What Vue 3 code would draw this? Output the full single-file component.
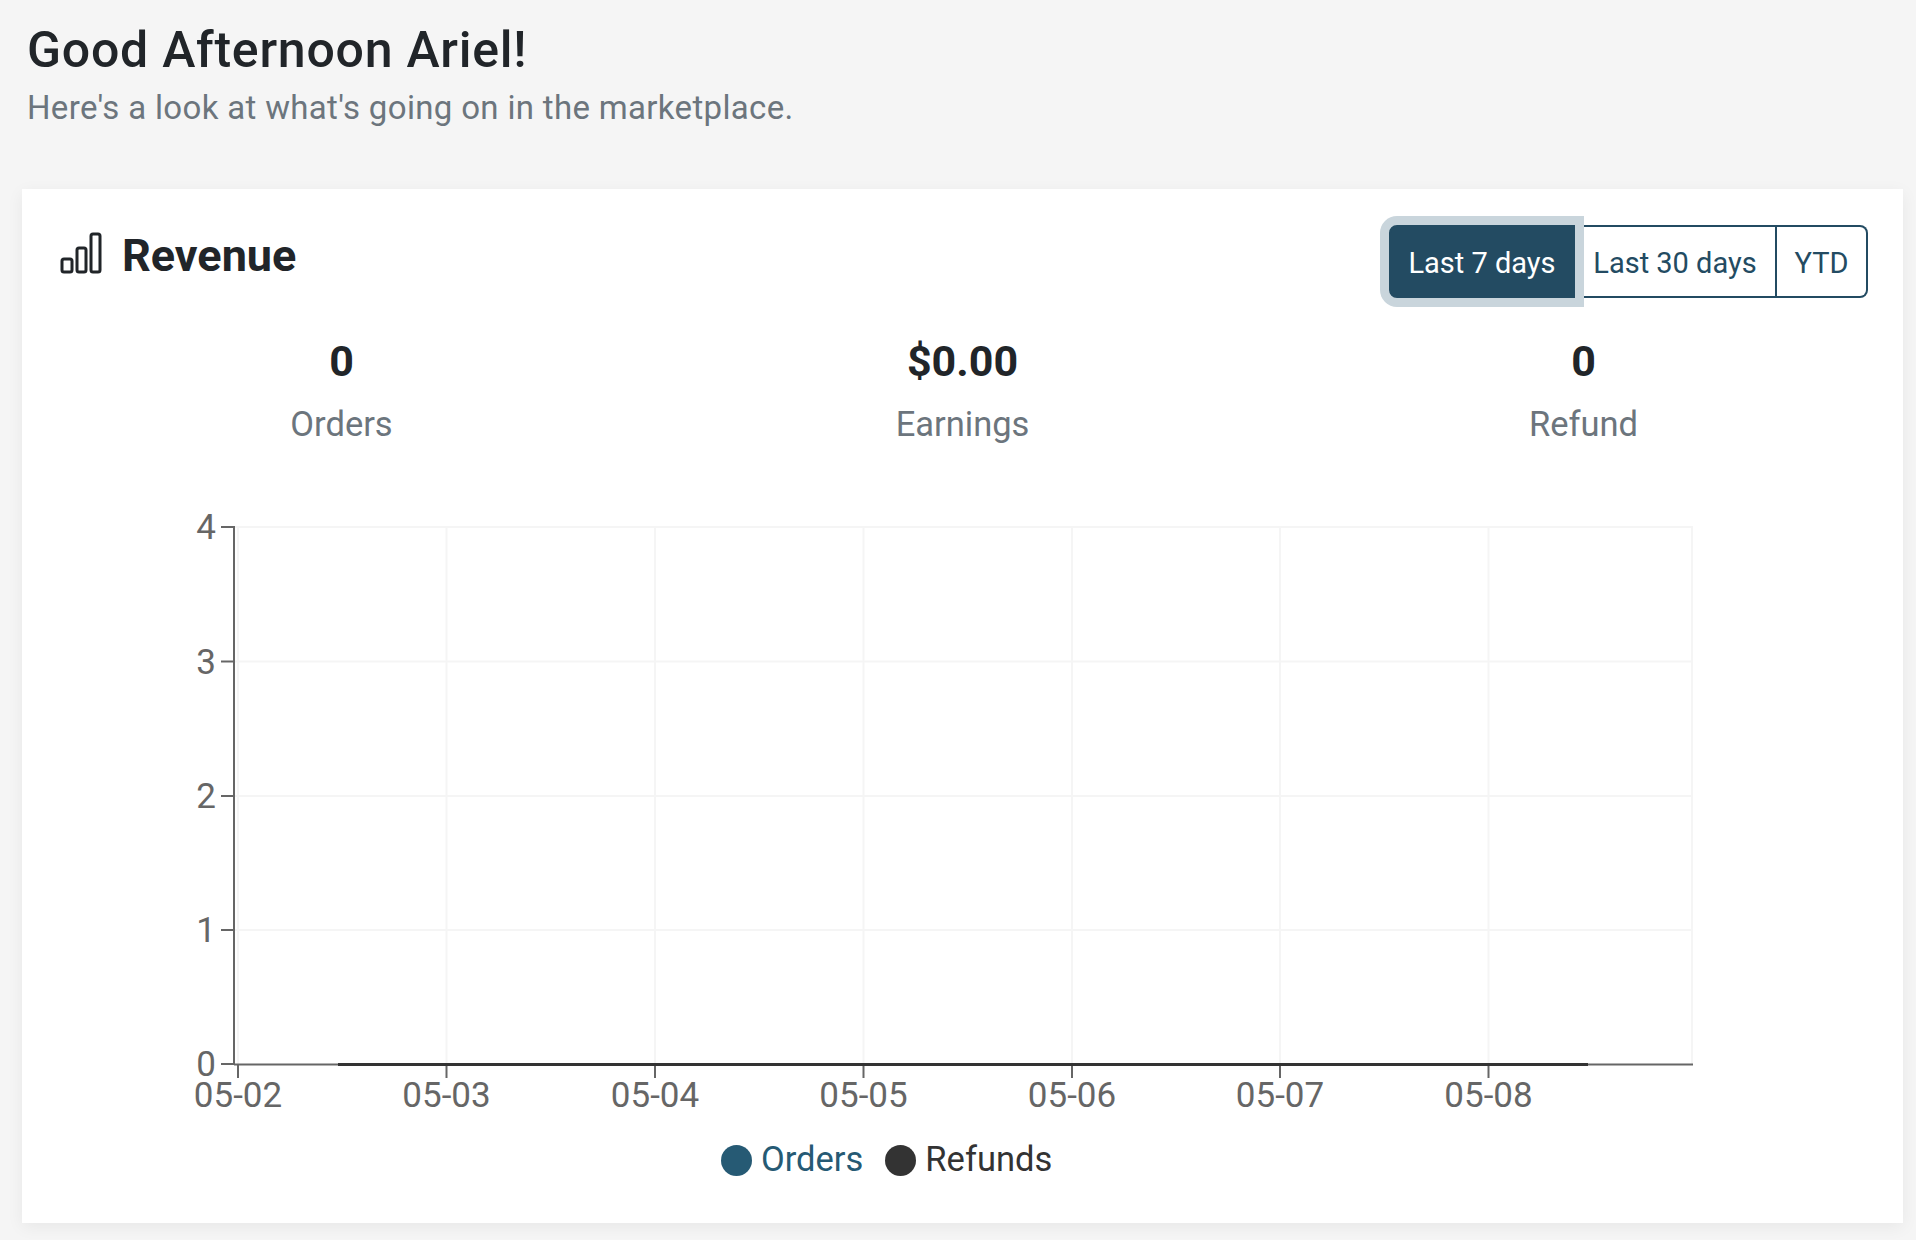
<script setup>
const yTicks = [
  { label: '4', y: 526 },
  { label: '3', y: 660.5 },
  { label: '2', y: 795 },
  { label: '1', y: 929 },
  { label: '0', y: 1063 }
]
const xTicks = [
  { label: '05-02', x: 238 },
  { label: '05-03', x: 446.5 },
  { label: '05-04', x: 655 },
  { label: '05-05', x: 863.5 },
  { label: '05-06', x: 1072 },
  { label: '05-07', x: 1280 },
  { label: '05-08', x: 1488.5 }
]
const stats = [
  { value: '0', label: 'Orders' },
  { value: '$0.00', label: 'Earnings' },
  { value: '0', label: 'Refund' }
]
const ranges = ['Last 7 days', 'Last 30 days', 'YTD']
</script>

<template>
  <div class="page">
    <header class="intro">
      <h1>Good Afternoon Ariel!</h1>
      <p>Here's a look at what's going on in the marketplace.</p>
    </header>

    <section class="card">
      <div class="card-head">
        <h2>
          <svg class="bars" width="42" height="42" viewBox="0 0 42 42" fill="none" stroke="#212529" stroke-width="3">
            <rect x="2" y="27" width="10" height="13" rx="2" />
            <rect x="17" y="16" width="9" height="24" rx="2" />
            <rect x="31" y="2" width="9" height="38" rx="2" />
          </svg>
          Revenue
        </h2>
        <div class="range">
          <button
            v-for="(r, i) in ranges"
            :key="r"
            type="button"
            :class="['range-btn', `range-${i}`, { active: i === 0 }]"
          >{{ r }}</button>
        </div>
      </div>

      <div class="stats">
        <div v-for="s in stats" :key="s.label" class="stat">
          <strong>{{ s.value }}</strong>
          <span>{{ s.label }}</span>
        </div>
      </div>

      <svg class="chart" width="1881" height="620" viewBox="22 500 1881 620">
        <g stroke="#f5f5f5" stroke-width="2">
          <line v-for="t in yTicks.slice(0, 4)" :key="t.label" x1="234" :y1="t.y" x2="1693" :y2="t.y" />
          <line v-for="t in xTicks.slice(1)" :key="t.label" :x1="t.x" y1="526" :x2="t.x" y2="1063" />
          <line x1="238" y1="526" x2="238" y2="1063" />
          <line x1="1692" y1="526" x2="1692" y2="1063" />
        </g>
        <g stroke="#666" stroke-width="2">
          <line x1="234" y1="525" x2="234" y2="1064" />
          <line x1="234" y1="1063.5" x2="1693" y2="1063.5" />
          <line v-for="t in yTicks" :key="t.label" x1="221" :y1="t.y" x2="234" :y2="t.y" />
          <line v-for="t in xTicks" :key="t.label" :x1="t.x" y1="1064" :x2="t.x" y2="1077" />
        </g>
        <line x1="338" y1="1063.5" x2="1588" y2="1063.5" stroke="#333" stroke-width="3" />
        <text v-for="t in yTicks" :key="t.label" class="tick" x="216" :y="t.y + 12" text-anchor="end">{{ t.label }}</text>
        <text v-for="t in xTicks" :key="t.label" class="tick" :x="t.x" y="1106" text-anchor="middle">{{ t.label }}</text>
      </svg>

      <div class="legend">
        <span class="item orders"><i></i>Orders</span>
        <span class="item refunds"><i></i>Refunds</span>
      </div>
    </section>
  </div>
</template>

<style scoped>
.page {
  box-sizing: border-box;
  height: 1240px;
  padding: 0 13px 0 22px;
  font-family: Roboto, "Liberation Sans", sans-serif;
  color: #212529;
  overflow: hidden;
}
.intro {
  padding: 22px 0 0 5px;
  height: 189px;
  box-sizing: border-box;
}
h1 {
  margin: 0;
  font-size: 50px;
  line-height: 56px;
  font-weight: 500;
  letter-spacing: 0.75px;
}
.intro p {
  margin: 10px 0 0;
  font-size: 33px;
  line-height: 40px;
  letter-spacing: 0.33px;
  color: #6c757d;
}
.card {
  height: 1034px;
  box-sizing: border-box;
  background: #fff;
  box-shadow: 0 4px 16px rgba(0, 0, 0, 0.06);
  padding-top: 36px;
}
.card-head {
  display: flex;
  justify-content: space-between;
  align-items: flex-start;
  padding: 0 35px 0 38px;
  height: 73px;
}
h2 {
  display: flex;
  align-items: flex-end;
  gap: 20px;
  margin: 0;
  padding-top: 7px;
  font-size: 45px;
  line-height: 48px;
  font-weight: 700;
}
.bars {
  margin-bottom: 6px;
}
.range {
  display: flex;
}
.range-btn {
  box-sizing: border-box;
  height: 73px;
  margin: 0;
  padding: 2px 0 0;
  font-family: Roboto, "Liberation Sans", sans-serif;
  font-size: 29px;
  color: #234b62;
  background: #fff;
  border: 2px solid #234b62;
}
.range-0 {
  width: 186px;
  border-radius: 8px 0 0 8px;
}
.range-1 {
  width: 202px;
  border-left: 0;
}
.range-2 {
  width: 91px;
  border-left: 0;
  border-radius: 0 8px 8px 0;
}
.range-btn.active {
  position: relative;
  z-index: 1;
  color: #fff;
  background: #234b62;
  box-shadow: 0 0 0 9px #c9d5dc;
  clip-path: inset(-9px -9px -9px -9px round 12px 0 0 12px);
}
.stats {
  display: grid;
  grid-template-columns: repeat(3, 621px);
  justify-content: center;
  margin-top: 38px;
  text-align: center;
}
.stat strong {
  display: block;
  font-size: 43px;
  line-height: 50px;
  font-weight: 700;
}
.stat span {
  display: block;
  margin-top: 18px;
  font-size: 34.5px;
  line-height: 40px;
  color: #6c757d;
}
.chart {
  display: block;
  margin-top: 57px;
}
.tick {
  font-family: Roboto, "Liberation Sans", sans-serif;
  font-size: 35px;
  fill: #666;
}
.legend {
  display: flex;
  gap: 22px;
  padding-left: 699px;
  margin-top: 18px;
  font-size: 34.5px;
  line-height: 40px;
}
.item {
  display: flex;
  align-items: center;
  gap: 9px;
}
.item i {
  width: 31px;
  height: 31px;
  border-radius: 50%;
  margin-top: 2px;
}
.orders { color: #265a74; }
.orders i { background: #265a74; }
.refunds { color: #333; }
.refunds i { background: #333; }
</style>

<style>
html, body { background: #f5f5f5; margin: 0; }
</style>
